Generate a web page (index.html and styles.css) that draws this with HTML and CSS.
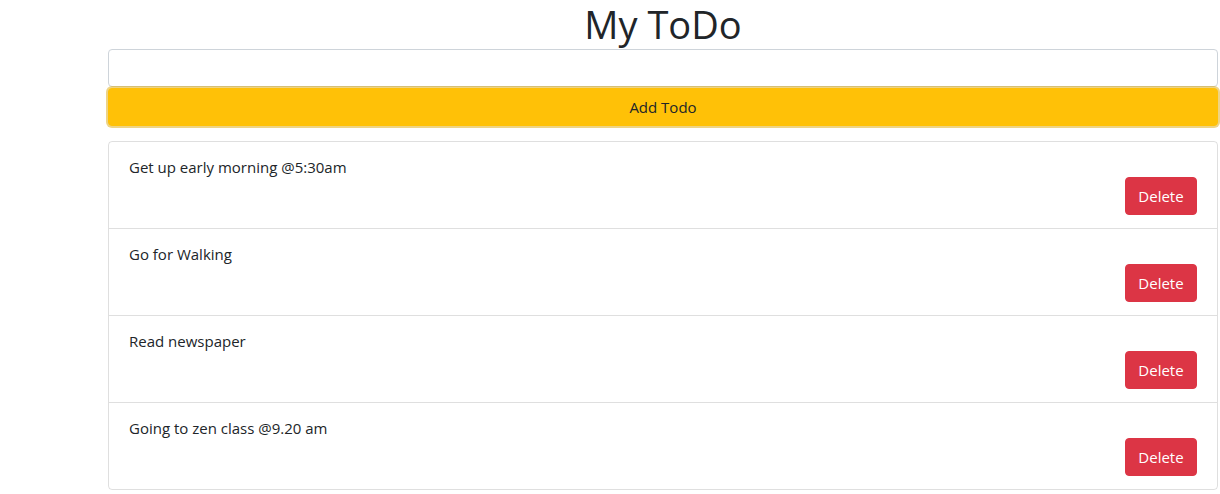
FILE: index.html
```html
<!DOCTYPE html>
<html>
<head>
<meta charset="utf-8">
<link rel="stylesheet" href="styles.css">
</head>
<body>
<div class="container">
  <h1 class="title">My ToDo</h1>
  <form class="add-form">
    <input class="todo-input" type="text">
    <button class="btn btn-warning" type="button">Add Todo</button>
  </form>
  <ul class="list-group">
    <li class="list-group-item">
      <div class="item-text">Get up early morning @5:30am</div>
      <div class="item-actions"><button class="btn btn-danger" type="button">Delete</button></div>
    </li>
    <li class="list-group-item">
      <div class="item-text">Go for Walking</div>
      <div class="item-actions"><button class="btn btn-danger" type="button">Delete</button></div>
    </li>
    <li class="list-group-item">
      <div class="item-text">Read newspaper</div>
      <div class="item-actions"><button class="btn btn-danger" type="button">Delete</button></div>
    </li>
    <li class="list-group-item">
      <div class="item-text">Going to zen class @9.20 am</div>
      <div class="item-actions"><button class="btn btn-danger" type="button">Delete</button></div>
    </li>
  </ul>
</div>
</body>
</html>
```
FILE: styles.css
```css
* { box-sizing: border-box; }
html, body { margin: 0; padding: 0; background: #fff; }
body {
  font-family: "Open Sans", "Noto Sans", "Liberation Sans", sans-serif;
  font-size: 16px;
  line-height: 24px;
  color: #212529;
  overflow: hidden;
}
.container {
  width: 1110px;
  margin-left: 108px;
}
.title {
  margin: 0;
  height: 49px;
  font-size: 38px;
  line-height: 49px;
  font-weight: 400;
  text-align: center;
  color: #212529;
}
.add-form { display: flex; flex-direction: column; margin: 0; }
.todo-input {
  display: block;
  width: 100%;
  height: 38px;
  border: 1px solid #ced4da;
  border-radius: 4px;
  padding: 6px 12px;
  font: inherit;
  outline: none;
}
.btn {
  display: inline-block;
  border: 1px solid transparent;
  border-radius: 4px;
  padding: 6px 12px;
  font: inherit;
  font-size: 15px;
  line-height: 24px;
  cursor: pointer;
}
.btn-warning {
  width: 100%;
  height: 38px;
  background: #ffc107;
  border-color: #ffc107;
  color: #212529;
  box-shadow: 0 0 0 2px rgba(222, 170, 12, 0.5);
  position: relative;
  top: 1px;
}
.list-group {
  list-style: none;
  margin: 16px 0 0;
  padding: 0;
  border: 1px solid rgba(0,0,0,0.125);
  border-radius: 4px;
}
.list-group-item {
  padding: 12px 20px;
  border-bottom: 1px solid rgba(0,0,0,0.125);
}
.list-group-item:last-child { border-bottom: none; }
.item-text { font-size: 15px; height: 23px; padding-top: 1px; line-height: 24px; }
.item-actions { display: flex; justify-content: flex-end; padding-bottom: 1px; }
.btn-danger {
  background: #dc3545;
  border-color: #dc3545;
  color: #fff;
  height: 38px;
  width: 72px;
  padding: 6px 0;
  text-align: center;
}
```
